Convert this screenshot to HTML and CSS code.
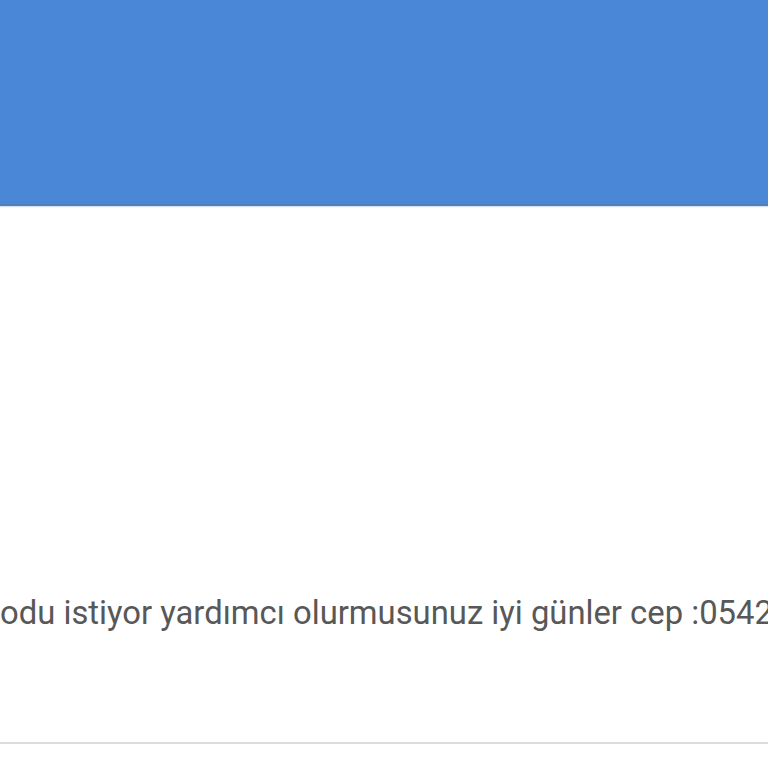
FILE: index.html
```html
<!DOCTYPE html>
<html lang="tr">
<head>
<meta charset="utf-8">
<link rel="stylesheet" href="styles.css">
</head>
<body>
<div class="page">
  <header class="topbar"></header>
  <main class="content">
    <p class="message">odu istiyor yardımcı olurmusunuz iyi günler cep :0542</p>
  </main>
  <div class="divider"></div>
</div>
</body>
</html>
```
FILE: styles.css
```css
html, body {
  margin: 0;
  padding: 0;
  background: #ffffff;
}
.page {
  width: 768px;
  height: 768px;
  overflow: hidden;
  display: flex;
  flex-direction: column;
}
.topbar {
  height: 204px;
  flex: none;
  background: #4a87d6;
  border-bottom: 2px solid #5a7db3;
  box-shadow: 0 1px 1px rgba(74, 135, 214, 0.25);
}
.content {
  flex: none;
  height: 536px;
  display: flex;
  flex-direction: column;
  justify-content: flex-start;
}
.message {
  margin: 389px 0 0 0;
  padding: 0;
  font-family: Roboto, "Noto Sans", sans-serif;
  font-size: 32.8px;
  line-height: 36px;
  color: #585858;
  white-space: nowrap;
  overflow: hidden;
}
.divider {
  flex: none;
  height: 2px;
  background: #dcdcdc;
}
```
